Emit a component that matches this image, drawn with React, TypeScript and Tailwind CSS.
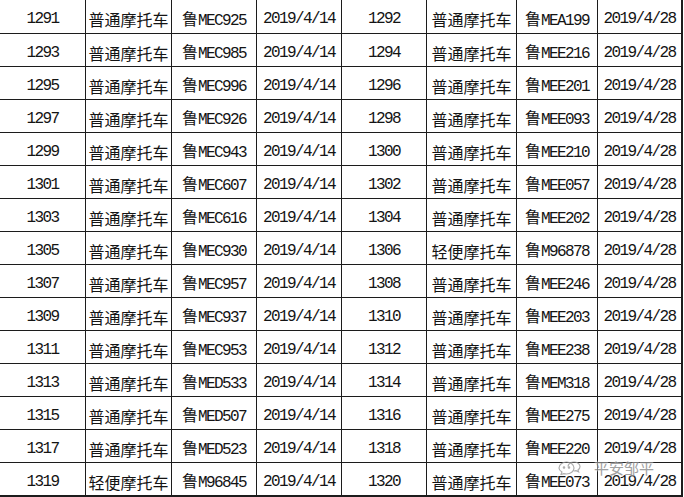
import React from 'react';

type Row = [string, string, string, string, string, string, string, string];

const rows: Row[] = [
  ['1291', '普通摩托车', 'MEC925', '2019/4/14', '1292', '普通摩托车', 'MEA199', '2019/4/28'],
  ['1293', '普通摩托车', 'MEC985', '2019/4/14', '1294', '普通摩托车', 'MEE216', '2019/4/28'],
  ['1295', '普通摩托车', 'MEC996', '2019/4/14', '1296', '普通摩托车', 'MEE201', '2019/4/28'],
  ['1297', '普通摩托车', 'MEC926', '2019/4/14', '1298', '普通摩托车', 'MEE093', '2019/4/28'],
  ['1299', '普通摩托车', 'MEC943', '2019/4/14', '1300', '普通摩托车', 'MEE210', '2019/4/28'],
  ['1301', '普通摩托车', 'MEC607', '2019/4/14', '1302', '普通摩托车', 'MEE057', '2019/4/28'],
  ['1303', '普通摩托车', 'MEC616', '2019/4/14', '1304', '普通摩托车', 'MEE202', '2019/4/28'],
  ['1305', '普通摩托车', 'MEC930', '2019/4/14', '1306', '轻便摩托车', 'M96878', '2019/4/28'],
  ['1307', '普通摩托车', 'MEC957', '2019/4/14', '1308', '普通摩托车', 'MEE246', '2019/4/28'],
  ['1309', '普通摩托车', 'MEC937', '2019/4/14', '1310', '普通摩托车', 'MEE203', '2019/4/28'],
  ['1311', '普通摩托车', 'MEC953', '2019/4/14', '1312', '普通摩托车', 'MEE238', '2019/4/28'],
  ['1313', '普通摩托车', 'MED533', '2019/4/14', '1314', '普通摩托车', 'MEM318', '2019/4/28'],
  ['1315', '普通摩托车', 'MED507', '2019/4/14', '1316', '普通摩托车', 'MEE275', '2019/4/28'],
  ['1317', '普通摩托车', 'MED523', '2019/4/14', '1318', '普通摩托车', 'MEE220', '2019/4/28'],
  ['1319', '轻便摩托车', 'M96845', '2019/4/14', '1320', '普通摩托车', 'MEE073', '2019/4/28'],
];

// column widths incl. the right border
const widths = ['w-[86px]', 'w-[86px]', 'w-[85px]', 'w-[85px]', 'w-[85px]', 'w-[90px]', 'w-[81px]', 'w-[85px]'];

const latin = "font-['Liberation_Mono',monospace] text-[16px] tracking-[-1.6px]";
const cjk = "font-['Noto_Sans_CJK_SC',sans-serif] text-[16px]";

const Cell: React.FC<{ col: number; value: string; bottom: boolean }> = ({ col, value, bottom }) => {
  const kind = col % 4;
  const last = col === 7;
  return (
    <div
      className={`${widths[col]} shrink-0 flex items-center justify-center pt-[5px] border-[#1c1c1c] ${
        bottom ? 'border-b-2' : 'border-b'
      } ${last ? 'border-r-2' : 'border-r'} text-[#141414] whitespace-nowrap leading-none`}
    >
      {kind === 1 ? (
        <span className={cjk}>{value}</span>
      ) : kind === 2 ? (
        <span className="flex items-baseline">
          <span className={cjk}>鲁</span>
          <span className={latin}>{value}</span>
        </span>
      ) : (
        <span className={latin}>{value}</span>
      )}
    </div>
  );
};

const Watermark: React.FC = () => (
  <div className="absolute left-[556px] top-[459px] flex items-center gap-[12px] opacity-80">
    <svg width="26" height="16" viewBox="0 0 26 16" fill="none" stroke="#9a9a9a" strokeWidth="1.2">
      <path d="M3 9c0-3.5 3.5-6 7.5-6s7.5 2.5 7.5 6-3.5 6-7.5 6c-1 0-2-.1-2.8-.4L5 15.5l.9-2.4C4.1 12 3 10.6 3 9z" />
      <path d="M12 7.5c0-2.6 3-4.5 6-4.5s6 1.9 6 4.5c0 1.4-.8 2.6-2 3.4l.6 1.9-2.5-1.1c-.7.2-1.4.3-2.1.3" />
      <circle cx="8" cy="8.5" r="0.7" fill="#9a9a9a" />
      <circle cx="13" cy="8.5" r="0.7" fill="#9a9a9a" />
    </svg>
    <span className="font-['Noto_Sans_CJK_SC',sans-serif] text-[15px] leading-none text-[#8a8a8a] [text-shadow:0_0_2px_#fff,0_0_2px_#fff]">
      平安邹平
    </span>
  </div>
);

export default function App() {
  return (
    <div className="relative w-[684px] h-[497px] bg-white overflow-hidden">
      <div className="flex flex-col">
        {rows.map((row, r) => {
          const isLast = r === rows.length - 1;
          return (
            <div key={r} className={`flex ${r === 0 ? 'h-[34px]' : isLast ? 'h-[34px]' : 'h-[33px]'}`}>
              {row.map((v, c) => (
                <Cell key={c} col={c} value={v} bottom={isLast} />
              ))}
            </div>
          );
        })}
      </div>
      <Watermark />
    </div>
  );
}
